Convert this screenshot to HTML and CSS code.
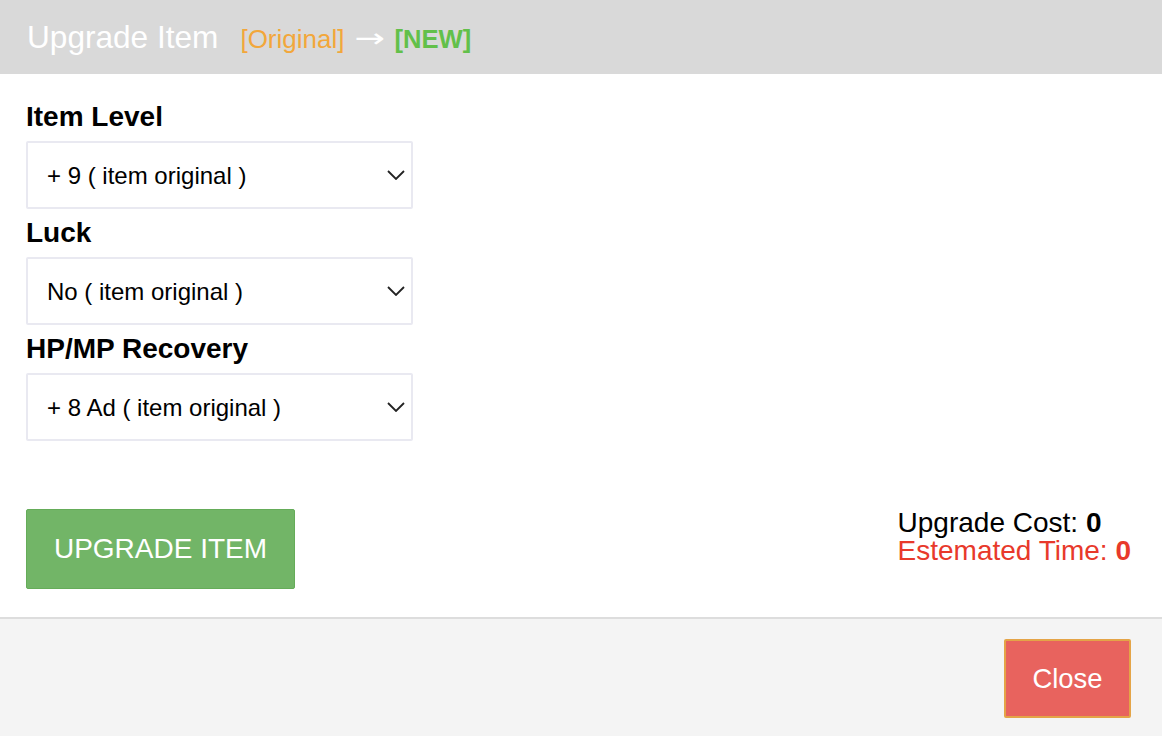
FILE: index.html
```html
<!DOCTYPE html>
<html>
<head>
<meta charset="utf-8">
<link rel="stylesheet" href="styles.css">
</head>
<body>
<div class="modal">
  <header class="modal-header">
    <h1 class="title">Upgrade Item</h1>
    <span class="orig">[Original]</span>
    <span class="arrow">→</span>
    <span class="new">[NEW]</span>
  </header>
  <main class="modal-body">
    <div class="fields">
      <label class="field-label">Item Level</label>
      <div class="select-wrap">
        <select class="select"><option>+ 9 ( item original )</option></select>
        <svg class="chev" width="18" height="10" viewBox="0 0 18 10"><path d="M1 1 L9 9 L17 1" fill="none" stroke="#222" stroke-width="1.8"/></svg>
      </div>
      <label class="field-label">Luck</label>
      <div class="select-wrap">
        <select class="select"><option>No ( item original )</option></select>
        <svg class="chev" width="18" height="10" viewBox="0 0 18 10"><path d="M1 1 L9 9 L17 1" fill="none" stroke="#222" stroke-width="1.8"/></svg>
      </div>
      <label class="field-label">HP/MP Recovery</label>
      <div class="select-wrap">
        <select class="select"><option>+ 8 Ad ( item original )</option></select>
        <svg class="chev" width="18" height="10" viewBox="0 0 18 10"><path d="M1 1 L9 9 L17 1" fill="none" stroke="#222" stroke-width="1.8"/></svg>
      </div>
    </div>
    <div class="actions">
      <button class="btn-upgrade">UPGRADE ITEM</button>
      <div class="cost">
        <div class="cost-line">Upgrade Cost: <b>0</b></div>
        <div class="cost-line time">Estemated Time: <b>0</b></div>
      </div>
    </div>
  </main>
  <footer class="modal-footer">
    <button class="btn-close">Close</button>
  </footer>
</div>
</body>
</html>
```
FILE: styles.css
```css
* { box-sizing: border-box; }
html, body { margin: 0; padding: 0; }
body {
  font-family: "Liberation Sans", Arial, sans-serif;
  background: #fff;
  width: 1162px;
  height: 736px;
  overflow: hidden;
}
.modal {
  display: flex;
  flex-direction: column;
  height: 736px;
}
.modal-header {
  height: 74px;
  background: #d9d9d9;
  display: flex;
  align-items: center;
  padding-left: 27px;
}
.title {
  margin: 0;
  font-size: 31.6px;
  font-weight: normal;
  color: #fff;
  margin-right: 22px;
}
.orig {
  font-size: 26px;
  color: #f2a73b;
  margin-top: 4px;
}
.arrow {
  display: inline-block;
  font-family: "DejaVu Sans", sans-serif;
  font-size: 26px;
  color: #fff;
  margin: 2px 8px 0 10px;
  width: 32px;
  text-align: center;
  transform: scaleX(1.4);
}
.new {
  font-size: 25.6px;
  font-weight: bold;
  color: #62c04a;
  margin-top: 4px;
}
.modal-body {
  padding: 19px 31px 28px 26px;
  border-bottom: 2px solid #dddddd;
}
.fields {
  display: flex;
  flex-direction: column;
  width: 387px;
}
.field-label {
  display: block;
  font-size: 28px;
  font-weight: bold;
  color: #000;
  line-height: 48px;
}
.select-wrap {
  position: relative;
}
.select {
  display: block;
  width: 387px;
  height: 68px;
  appearance: none;
  -webkit-appearance: none;
  background: #fff;
  border: 2px solid #e9e9f1;
  border-radius: 2px;
  padding: 0 40px 0 19px;
  font-family: "Liberation Sans", Arial, sans-serif;
  font-size: 24px;
  color: #000;
  outline: none;
}
.chev {
  position: absolute;
  right: 8px;
  top: 29px;
  pointer-events: none;
}
.actions {
  display: flex;
  justify-content: space-between;
  align-items: flex-start;
  margin-top: 68px;
}
.btn-upgrade {
  width: 269px;
  height: 80px;
  background: #72b567;
  border: 1px solid #65ac59;
  border-radius: 2px;
  color: #fff;
  font-family: "Liberation Sans", Arial, sans-serif;
  font-size: 28px;
  padding: 0;
}
.cost {
  font-size: 28px;
  line-height: 28px;
  color: #000;
}
.cost-line b { font-weight: bold; }
.time { color: #e8392b; }
.modal-footer {
  flex: 1;
  background: #f4f4f4;
  display: flex;
  justify-content: flex-end;
  align-items: flex-start;
  padding: 20px 31px 0 0;
}
.btn-close {
  width: 127px;
  height: 79px;
  background: #e8635e;
  border: 2px solid #e4a447;
  border-radius: 2px;
  color: #fff;
  font-family: "Liberation Sans", Arial, sans-serif;
  font-size: 27.4px;
  padding: 0;
}
```
